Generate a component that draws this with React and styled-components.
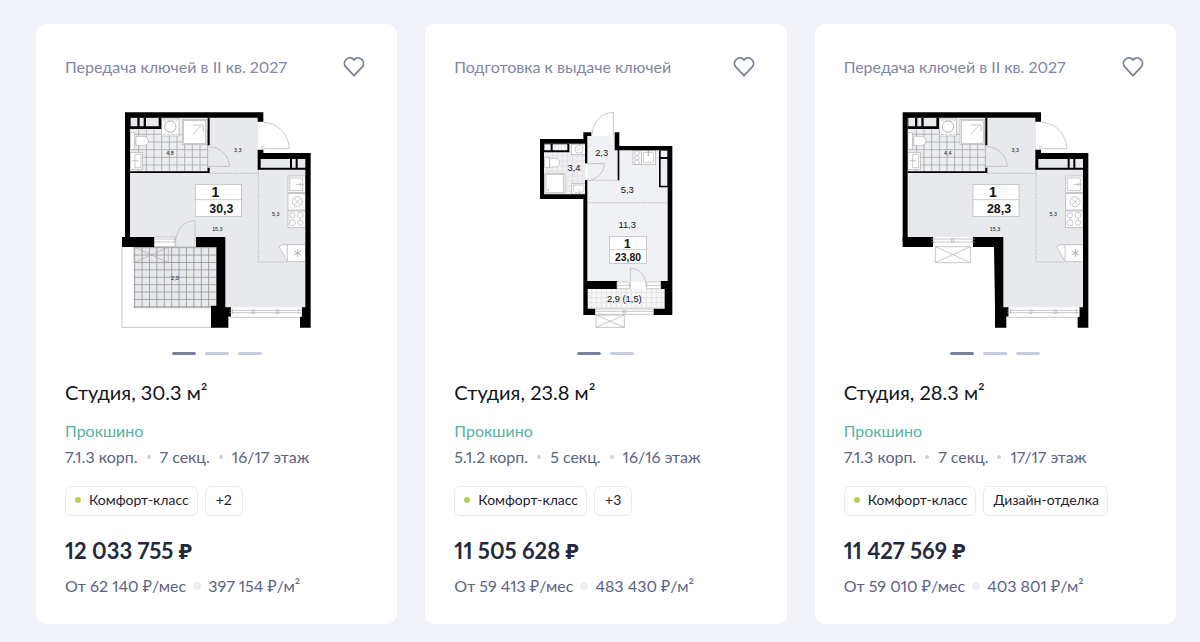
import React from 'react';
import styled, { createGlobalStyle } from 'styled-components';

const GlobalStyle = createGlobalStyle`
  *, *::before, *::after { box-sizing: border-box; }
  body {
    margin: 0;
    background: #f1f3f8;
    font-family: Lato, "Noto Sans", sans-serif;
    font-variant-numeric: proportional-nums;
    color: #1d2230;
  }
`;

const Page = styled.main`
  padding: 24px 24px 18px 36px;
`;

const CardList = styled.ul`
  display: grid;
  grid-template-columns: repeat(3, minmax(0, 1fr));
  gap: 28px;
  margin: 0;
  padding: 0;
  list-style: none;
`;

const Card = styled.li`
  display: flex;
  flex-direction: column;
  padding: 24px 29px 26px;
  border-radius: 10px;
  background: #fff;
`;

const CardHeader = styled.header`
  display: flex;
  align-items: center;
  justify-content: space-between;
  height: 38px;
`;

const Status = styled.span`
  padding-bottom: 1px;
  font-size: 16px;
  line-height: 24px;
  color: #7f86a6;
`;

const FavoriteButton = styled.button`
  display: flex;
  align-items: center;
  justify-content: center;
  width: 28px;
  height: 28px;
  padding: 0;
  border: 0;
  background: none;
  color: #7a819f;
  cursor: pointer;
`;

const PlanFigure = styled.figure`
  display: flex;
  justify-content: center;
  margin: 24px 0 22px;
`;

const PlanSvg = styled.svg`
  display: block;
  width: 220px;
  height: 220px;
  font-family: "Liberation Sans", Arial, sans-serif;
`;

const Pagination = styled.div`
  display: flex;
  justify-content: center;
  gap: 9px;
`;

const PageDash = styled.button`
  width: 24px;
  height: 3px;
  padding: 0;
  border: 0;
  border-radius: 2px;
  background: ${(p) => (p.$active ? '#7a819f' : '#c8cce0')};
  cursor: pointer;
`;

const Title = styled.h2`
  margin: 23px 0 12px;
  font-size: 20px;
  font-weight: 400;
  line-height: 28px;
  color: #12151c;
`;

const ProjectLink = styled.a`
  align-self: flex-start;
  font-size: 16px;
  line-height: 26px;
  color: #54b3a0;
  text-decoration: none;
`;

const Location = styled.div`
  display: flex;
  align-items: center;
  gap: 9px;
  font-size: 16px;
  line-height: 26px;
  color: #5b6484;
`;

const Dot = styled.span`
  flex: none;
  width: ${(p) => p.$size}px;
  height: ${(p) => p.$size}px;
  border-radius: 50%;
  background: ${(p) => p.$color};
`;

const Tags = styled.div`
  display: flex;
  gap: 7px;
  margin: 16px 0 21px;
`;

const Tag = styled.span`
  display: flex;
  align-items: center;
  gap: 8px;
  height: 30px;
  padding: 0 8px 2px 9px;
  border: 1px solid #e9eaf3;
  border-radius: 6px;
  background: #fff;
  font-family: inherit;
  font-size: 14px;
  line-height: 20px;
  color: #1d2230;
`;

const MoreTag = styled(Tag)`
  padding: 0 10px 2px;
  cursor: pointer;
`;

const Price = styled.strong`
  font-size: 22px;
  font-weight: 700;
  line-height: 28px;
  color: #232a40;
`;

const Terms = styled.div`
  display: flex;
  align-items: center;
  gap: 7px;
  margin-top: 9px;
  font-size: 16px;
  line-height: 24px;
  color: #5b6484;
`;

function HeartIcon() {
  return (
    <svg width="22" height="22" viewBox="0 0 22 22" fill="none" stroke="currentColor" strokeWidth="1.8" aria-hidden="true">
      <path d="M11 3.8C8.9 1.4 5.6 1.3 3.4 3.3C0.9 5.6 0.9 8.9 3 11.2L11 19.6L19 11.2C21.1 8.9 21.1 5.6 18.6 3.3C16.4 1.3 13.1 1.4 11 3.8Z" />
    </svg>
  );
}

const range = (from, to, step) => {
  const out = [];
  for (let v = from; v < to; v += step) out.push(v);
  return out;
};

function Grid({ x1, y1, x2, y2, startX, startY, step, color }) {
  const d = [
    ...range(startX, x2, step).map((x) => `M${x} ${y1}V${y2}`),
    ...range(startY, y2, step).map((y) => `M${x1} ${y}H${x2}`),
  ].join('');
  return <path d={d} stroke={color} strokeWidth="2.4" fill="none" />;
}

function Label({ x, y, size, bold, children }) {
  return (
    <text x={x} y={y} fontSize={size} fontWeight={bold ? 700 : 400} textAnchor="middle" fill="#111">
      {children}
    </text>
  );
}

const LINE = '#b4b4b6';

function CornerPlan({ area, bath, balcony }) {
  return (
    <PlanSvg viewBox={balcony ? '-9 30 660 660' : '-8 30 660 660'} role="img" aria-label={`План студии ${area} м²`}>
      <path d="M60 53H445V205H587V624H345V425H60Z" fill="#e7e9ec" />
      <path d="M60 88H155V53H295V215H60Z" fill="#eceef0" />
      <Grid x1={60} y1={88} x2={294} y2={215} startX={86} startY={103} step={23} color="#a3a5a8" />
      {balcony && (
        <g>
          <rect x="71" y="441" width="247" height="182" fill="#e7e9ec" />
          <Grid x1={71} y1={441} x2={318} y2={624} startX={74} startY={443} step={22.2} color="#8f9194" />
          <path d="M36 441V682H303M71 623H318M72 441H175V488H72ZM72 441L175 488M175 441L72 488" fill="none" stroke="#a9a9ab" strokeWidth="2" />
        </g>
      )}

      <g fill="#fff" stroke={LINE} strokeWidth="2.2">
        <rect x="155" y="57" width="52" height="51" />
        <circle cx="181" cy="80" r="17" strokeWidth="3" />
        <path d="M160 63H202M160 103H202" strokeDasharray="8 4" />
        <rect x="217" y="58" width="74" height="76" />
        <rect x="221" y="62" width="66" height="68" />
        <path d="M249 103L272 78M250 75H280V94" fill="none" />
        <rect x="61" y="98" width="13" height="50" />
        <path d="M78 109H98C121 109 121 137 98 137H78Z" />
        <rect x="61" y="157" width="37" height="52" />
        <path d="M75 163H93V203H75ZM66 182H86" />
        <rect x="534" y="228" width="52" height="50" />
        <path d="M539 234H578V272H539ZM558 253H582M571 247V259" />
        <rect x="534" y="281" width="52" height="49" />
        <circle cx="562" cy="305" r="15" />
        <path d="M552 295L572 315M572 295L552 315" />
        <rect x="534" y="333" width="52" height="50" />
        <circle cx="547" cy="346" r="8" />
        <circle cx="571" cy="346" r="9" />
        <circle cx="547" cy="368" r="9" />
        <circle cx="571" cy="368" r="8" />
        <path d="M532 484L507 440L517 434H587V485H532ZM532 434V484" />
        <path d="M563 447V471M552 453L574 465M574 453L552 465" strokeWidth="3" />
      </g>
      <path d="M299 220H445M445 209V486H532" fill="none" stroke="#a0a2a5" strokeWidth="2" strokeDasharray="4 3" />

      <g fill="#000">
        <path d="M45 37H460V65H443V53H60V425H45Z" />
        <path d="M443 149H460V159H602V683H570V650H575V622H586V209H443Z" />
        <path d="M60 53H154V87H60Z" />
        <path d="M293 53H299V136H293ZM293 203H299V219H60V214H293Z" />
        {balcony ? (
          <path d="M36 411H133V441H36ZM258 411H346V622H363V650H355V683H303V617H319V441H258Z" />
        ) : (
          <path d="M45 411H136V441H45ZM256 411H347V622H363V650H356V683H322V617L319 441H256Z" />
        )}
      </g>
      <g fill="#e7e9ec">
        <path d="M62 54H82V79H62ZM89 54H101V79H89ZM108 54H146V79H108Z" />
        <path d="M452 177H540V203H452ZM546 177H557V203H546ZM563 177H586V203H563Z" />
      </g>

      <path d="M460 67C503 68 536 103 538 146H456V139H464" fill="#fff" stroke={LINE} strokeWidth="2.2" />
      <path d="M299 140C332 142 357 167 359 199H295" fill="none" stroke={LINE} strokeWidth="2.2" />
      <path d="M363 622H575V650H570V652H355V650H363Z" fill="#fff" />
      <path d="M359 631H574M359 638H574M363 652H570M368 626V642M566 626V642M426 630H433V640H426ZM499 630H506V640H499Z" stroke={LINE} fill="#fff" strokeWidth="2.2" />
      {balcony ? (
        <g stroke={LINE} strokeWidth="2.2">
          <rect x="133" y="411" width="63" height="29" fill="#fff" />
          <path d="M133 417H196M133 426H196M192 414V430" />
          <path d="M255 441V362C223 363 198 388 197 425V441Z" fill="#e7e9ec" />
        </g>
      ) : (
        <g stroke={LINE} strokeWidth="2.2" fill="#fff">
          <rect x="136" y="411" width="120" height="29" stroke="none" />
          <path d="M131 417H262M131 426H262M138 413V431M254 413V431M192 416H199V427H192Z" />
          <path d="M143 440H248V488H143ZM143 440L248 488M248 440L143 488" />
        </g>
      )}

      <rect x="256" y="253" width="138" height="97" fill="#fff" stroke={LINE} strokeWidth="2" />
      <path d="M256 299H394" stroke={LINE} strokeWidth="2" />
      <Label x={316} y={291} size={42} bold>1</Label>
      <Label x={334} y={338} size={37} bold>{area}</Label>
      <Label x={180} y={164} size={16}>{bath}</Label>
      <Label x={383} y={157} size={16}>3,3</Label>
      <Label x={497} y={348} size={16}>5,3</Label>
      <Label x={322} y={392} size={16}>15,3</Label>
      {balcony && <Label x={195} y={540} size={17}>{balcony}</Label>}
    </PlanSvg>
  );
}

function LoggiaPlan() {
  return (
    <PlanSvg viewBox="-102 30 660 660" role="img" aria-label="План студии 23,8 м²">
      <path d="M172 108H255V151H413V545H172ZM42 131H168V283H42Z" fill="#f0f1f4" />
      <rect x="173" y="566" width="231" height="61" fill="#f7f7f9" />
      <Grid x1={42} y1={157} x2={165} y2={283} startX={52} startY={168} step={15} color="#dddee1" />
      <Grid x1={174} y1={567} x2={404} y2={626} startX={184} startY={578} step={15} color="#dddee1" />

      <g fill="#fff" stroke={LINE} strokeWidth="2.2">
        <rect x="124" y="133" width="42" height="31" />
        <circle cx="147" cy="148" r="12" />
        <path d="M141 153L153 143" />
        <rect x="44" y="173" width="15" height="30" />
        <path d="M59 175H74C94 175 94 201 74 201H59Z" />
        <rect x="44" y="220" width="61" height="62" />
        <rect x="48" y="224" width="53" height="54" />
        <circle cx="55" cy="270" r="2" />
        <rect x="125" y="250" width="41" height="32" />
        <path d="M130 255H162V272C150 282 140 282 130 272ZM147 269V280" />
        <rect x="309" y="151" width="25" height="43" />
        <circle cx="321" cy="159" r="7" />
        <circle cx="321" cy="173" r="7" />
        <circle cx="321" cy="187" r="7" />
        <rect x="334" y="151" width="43" height="43" />
        <rect x="340" y="157" width="31" height="31" rx="4" />
        <path d="M355 151V169" strokeWidth="4" />
      </g>
      <path d="M172 241H265M172 308H412" fill="none" stroke="#a0a2a5" strokeWidth="2" strokeDasharray="4 3" />

      <g fill="#000">
        <path d="M30 117H160V97H184V108H172V190H165V131H42V283H165V240H172V543H261V567H173V626H196V645H160V297H30Z" />
        <path d="M254 97H268V138H427V645H370V626H404V567H392V543H413V151H268V241H263V151H254Z" />
        <path d="M42 131H118V157H42ZM387 151H414V262H387Z" />
      </g>
      <path d="M43 133H62V151H43ZM68 133H112V151H68ZM392 152H412V171H392ZM392 177H412V257H392Z" fill="#f0f1f4" />

      <g fill="none" stroke={LINE} strokeWidth="2.2">
        <path d="M250 108V37C215 38 188 66 186 105" />
        <path d="M171 191H223C222 219 199 240 171 242" />
        <path d="M301 567V505C329 506 348 525 348 560" />
        <path d="M261 546H298V566H261ZM261 556H298M350 546H392V566H350ZM350 556H392" fill="#fff" />
        <path d="M196 627H370V643H196ZM196 634H370M279 631H287V639H279Z" fill="#fff" />
        <path d="M198 645H283V682H198ZM198 645L283 682M283 645L198 682" fill="#fff" />
      </g>

      <rect x="238" y="410" width="112" height="80" fill="#fff" stroke={LINE} strokeWidth="2" />
      <path d="M238 449H350" stroke={LINE} strokeWidth="2" />
      <Label x={292} y={443} size={36} bold>1</Label>
      <Label x={294} y={482} size={31} bold>23,80</Label>
      <Label x={215} y={167} size={28}>2,3</Label>
      <Label x={132} y={213} size={28}>3,4</Label>
      <Label x={292} y={278} size={28}>5,3</Label>
      <Label x={292} y={385} size={28}>11,3</Label>
      <Label x={283} y={605} size={28}>2,9 (1,5)</Label>
    </PlanSvg>
  );
}

const flats = [
  {
    id: 'a',
    status: 'Передача ключей в II кв. 2027',
    plan: <CornerPlan area="30,3" bath="4,8" balcony="2,0" />,
    slides: 3,
    title: 'Студия, 30.3 м²',
    location: ['7.1.3 корп.', '7 секц.', '16/17 этаж'],
    more: '+2',
    price: '12 033 755 ₽',
    monthly: 'От 62 140 ₽/мес',
    perMeter: '397 154 ₽/м²',
  },
  {
    id: 'b',
    status: 'Подготовка к выдаче ключей',
    plan: <LoggiaPlan />,
    slides: 2,
    title: 'Студия, 23.8 м²',
    location: ['5.1.2 корп.', '5 секц.', '16/16 этаж'],
    more: '+3',
    price: '11 505 628 ₽',
    monthly: 'От 59 413 ₽/мес',
    perMeter: '483 430 ₽/м²',
  },
  {
    id: 'c',
    status: 'Передача ключей в II кв. 2027',
    plan: <CornerPlan area="28,3" bath="4,4" />,
    slides: 3,
    title: 'Студия, 28.3 м²',
    location: ['7.1.3 корп.', '7 секц.', '17/17 этаж'],
    finish: 'Дизайн-отделка',
    price: '11 427 569 ₽',
    monthly: 'От 59 010 ₽/мес',
    perMeter: '403 801 ₽/м²',
  },
];

function FlatCard({ flat }) {
  return (
    <Card>
      <CardHeader>
        <Status>{flat.status}</Status>
        <FavoriteButton type="button" aria-label="Добавить в избранное">
          <HeartIcon />
        </FavoriteButton>
      </CardHeader>
      <PlanFigure>{flat.plan}</PlanFigure>
      <Pagination>
        {range(0, flat.slides, 1).map((i) => (
          <PageDash key={i} type="button" $active={i === 0} aria-label={`Изображение ${i + 1}`} />
        ))}
      </Pagination>
      <Title>{flat.title}</Title>
      <ProjectLink href="#prokshino">Прокшино</ProjectLink>
      <Location>
        {flat.location.map((part, i) => (
          <React.Fragment key={part}>
            {i > 0 && <Dot $size={4} $color="#cdd1e0" />}
            <span>{part}</span>
          </React.Fragment>
        ))}
      </Location>
      <Tags>
        <Tag>
          <Dot $size={6} $color="#b3cf5a" />
          Комфорт-класс
        </Tag>
        {flat.more && <MoreTag as="button" type="button">{flat.more}</MoreTag>}
        {flat.finish && <Tag>{flat.finish}</Tag>}
      </Tags>
      <Price>{flat.price}</Price>
      <Terms>
        <span>{flat.monthly}</span>
        <Dot $size={8} $color="#eceef5" />
        <span>{flat.perMeter}</span>
      </Terms>
    </Card>
  );
}

export default function App() {
  return (
    <>
      <GlobalStyle />
      <Page>
        <CardList>
          {flats.map((flat) => (
            <FlatCard key={flat.id} flat={flat} />
          ))}
        </CardList>
      </Page>
    </>
  );
}
